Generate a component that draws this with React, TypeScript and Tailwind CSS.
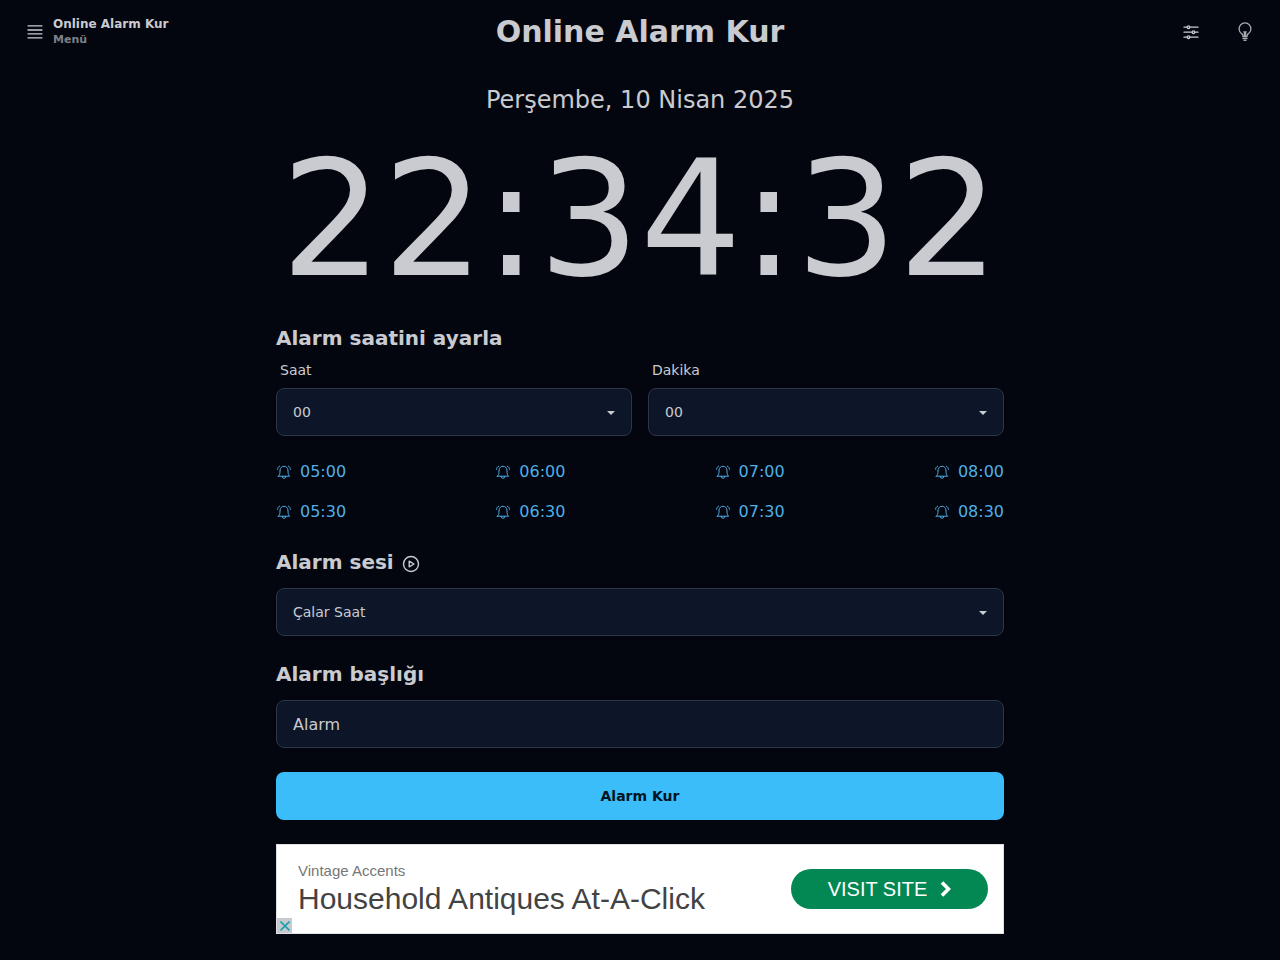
import { useState } from "react";
import type { ReactNode, SVGProps } from "react";

function Icon({ children, ...props }: SVGProps<SVGSVGElement> & { children: ReactNode }) {
  return (
    <svg
      fill="none"
      stroke="currentColor"
      strokeLinecap="round"
      strokeLinejoin="round"
      aria-hidden="true"
      {...props}
    >
      {children}
    </svg>
  );
}

function MenuIcon() {
  return (
    <Icon viewBox="0 0 18 18" className="size-[18px] shrink-0" strokeWidth="1.3">
      <path d="M2 2.8h14M2 7h14M2 10.8h14M2 14.8h14" />
    </Icon>
  );
}

function SlidersIcon() {
  return (
    <Icon viewBox="0 0 18 18" className="size-[18px]" strokeWidth="1.3">
      <path d="M2 4.2h3.1M7.9 4.2H16M2 9.2h8.1M12.9 9.2H16M2 14.2h3.1M7.9 14.2H16" />
      <circle cx="6.5" cy="4.2" r="1.3" />
      <circle cx="11.5" cy="9.2" r="1.3" />
      <circle cx="6.5" cy="14.2" r="1.3" />
    </Icon>
  );
}

function BulbIcon() {
  return (
    <Icon viewBox="0 0 18 20" className="h-5 w-[18px] text-[#a9abb1]" strokeWidth="1.3">
      <path d="M7 14c0-1.2-.4-1.700-1.400-2.400a5.900 5.900 0 1 1 6.800 0c-1 .7-1.400 1.200-1.400 2.400" />
      <path d="M7 14.500h4M7 16.500h4M8 18.300h2M8.400 14v-3.800M9.600 14v-3.800M7.800 9.800h2.400" />
    </Icon>
  );
}

function BellIcon() {
  return (
    <Icon viewBox="0 0 16 16" className="size-4" strokeWidth="1">
      <path d="M2.300 12.200h11.400c-1.100-1-1.500-2-1.600-3.700l-.2-2.600C11.700 3.800 10.200 2.300 8 2.300S4.300 3.800 4.100 5.900l-.2 2.600c-.1 1.700-.5 2.700-1.600 3.700Z" />
      <path d="M6.200 12.500a1.800 1.800 0 0 0 3.600 0M3.600 2.200C2.300 2.800 1.700 3.800 1.600 5.300M12.400 2.200c1.300.6 1.900 1.600 2 3.100" />
    </Icon>
  );
}

function PlayIcon() {
  return (
    <Icon viewBox="0 0 18 18" className="size-[18px]" strokeWidth="1.4">
      <circle cx="9" cy="9" r="7.5" />
      <path d="M7.2 6.2v5.6L12 9Z" />
    </Icon>
  );
}

type SelectProps = {
  id: string;
  label?: string;
  ariaLabel?: string;
  options: string[];
  value: string;
  onChange: (value: string) => void;
};

function SelectField({ id, label, ariaLabel, options, value, onChange }: SelectProps) {
  return (
    <div className="min-w-0 flex-1">
      {label && (
        <label htmlFor={id} className="block px-1 pb-2 text-sm">
          {label}
        </label>
      )}
      <div className="relative">
        <select
          id={id}
          aria-label={ariaLabel}
          value={value}
          onChange={(e) => onChange(e.target.value)}
          className="block h-12 w-full appearance-none rounded-lg border border-[#2f3543] bg-[#0d1628] px-4 text-sm"
        >
          {options.map((o) => (
            <option key={o}>{o}</option>
          ))}
        </select>
        <svg
          viewBox="0 0 8 4"
          className="pointer-events-none absolute top-[23px] right-[17px] h-1 w-2"
          fill="currentColor"
          aria-hidden="true"
        >
          <path d="M0 0h8L4 4Z" />
        </svg>
      </div>
    </div>
  );
}

const pad = (n: number) => String(n).padStart(2, "0");
const hours = Array.from({ length: 24 }, (_, i) => pad(i));
const minutes = Array.from({ length: 60 }, (_, i) => pad(i));
const presets = [
  ["05:00", "05:30"],
  ["06:00", "06:30"],
  ["07:00", "07:30"],
  ["08:00", "08:30"],
];

export default function App() {
  const [hour, setHour] = useState("00");
  const [minute, setMinute] = useState("00");
  const [sound, setSound] = useState("Çalar Saat");
  const [title, setTitle] = useState("Alarm");

  const pick = (time: string) => {
    const [h, m] = time.split(":");
    setHour(h);
    setMinute(m);
  };

  return (
    <div className="min-h-screen bg-[#03060e] font-['DejaVu_Sans',sans-serif] text-[#c9cbd0]">
      <header className="grid h-16 grid-cols-[1fr_auto_1fr] items-center px-[26px]">
        <button type="button" className="flex items-center gap-[9px] justify-self-start text-left font-bold">
          <MenuIcon />
          <span>
            <span className="block text-xs leading-4">Online Alarm Kur</span>
            <span className="block text-[11px] leading-4 text-[#7d8087]">Menü</span>
          </span>
        </button>
        <h1 className="text-3xl font-bold">Online Alarm Kur</h1>
        <div className="flex items-center gap-9 justify-self-end">
          <button type="button" aria-label="Ayarlar">
            <SlidersIcon />
          </button>
          <button type="button" aria-label="Tema">
            <BulbIcon />
          </button>
        </div>
      </header>

      <main className="mx-auto flex max-w-[760px] flex-col px-4 pt-5 pb-6">
        <p className="text-center text-2xl">Perşembe, 10 Nisan 2025</p>
        <time dateTime="22:34:32" className="mt-6 block text-center text-[160px] leading-none">
          22:34:32
        </time>

        <h2 className="mt-6 text-xl font-bold">Alarm saatini ayarla</h2>
        <div className="mt-2 flex gap-4">
          <SelectField id="hour" label="Saat" options={hours} value={hour} onChange={setHour} />
          <SelectField id="minute" label="Dakika" options={minutes} value={minute} onChange={setMinute} />
        </div>

        <div className="mt-6 flex justify-between">
          {presets.map((column) => (
            <div key={column[0]} className="flex flex-col gap-4">
              {column.map((time) => (
                <button
                  key={time}
                  type="button"
                  onClick={() => pick(time)}
                  className="flex items-center gap-2 text-base text-[#4fafe6]"
                >
                  <BellIcon />
                  {time}
                </button>
              ))}
            </div>
          ))}
        </div>

        <div className="mt-6 flex items-center gap-2">
          <h2 className="text-xl font-bold">Alarm sesi</h2>
          <button type="button" aria-label="Sesi çal" className="pt-1">
            <PlayIcon />
          </button>
        </div>
        <div className="mt-3 flex">
          <SelectField
            id="sound"
            ariaLabel="Alarm sesi"
            options={["Çalar Saat"]}
            value={sound}
            onChange={setSound}
          />
        </div>

        <label htmlFor="title" className="mt-6 text-xl font-bold">
          Alarm başlığı
        </label>
        <input
          id="title"
          type="text"
          value={title}
          onChange={(e) => setTitle(e.target.value)}
          className="mt-3 h-12 w-full rounded-lg border border-[#2f3543] bg-[#0d1628] px-4 text-base"
        />

        <button
          type="button"
          className="mt-6 h-12 w-full rounded-lg bg-[#3abdf8] text-sm font-bold text-[#03131f]"
        >
          Alarm Kur
        </button>

        <aside className="relative mt-6 flex h-[90px] items-center justify-between border border-[#dfe1e5] bg-white pr-[15px] pl-[21px] font-['Liberation_Sans',Arial,sans-serif]">
          <div>
            <p className="text-[15px] leading-5 text-[#777777]">Vintage Accents</p>
            <p className="text-[30px] leading-9 text-[#434343]">Household Antiques At-A-Click</p>
          </div>
          <a
            href="#visit"
            className="flex h-10 w-[197px] items-center justify-center gap-3 rounded-full bg-[#048853] text-xl text-white"
          >
            VISIT SITE
            <svg viewBox="0 0 12 16" className="h-4 w-3" fill="none" stroke="currentColor" strokeWidth="3.6" aria-hidden="true">
              <path d="M3 1.5 9.500 8 3 14.500" />
            </svg>
          </a>
          <button
            type="button"
            aria-label="Reklamı kapat"
            className="absolute bottom-0 left-0 flex size-[15px] items-center justify-center bg-[#c6cacf] text-[#1f9fb0]"
          >
            <svg viewBox="0 0 10 10" className="size-[10px]" fill="none" stroke="currentColor" strokeWidth="1.6" aria-hidden="true">
              <path d="m.5.5 9 9M9.500.5l-9 9" />
            </svg>
          </button>
        </aside>
      </main>
    </div>
  );
}
